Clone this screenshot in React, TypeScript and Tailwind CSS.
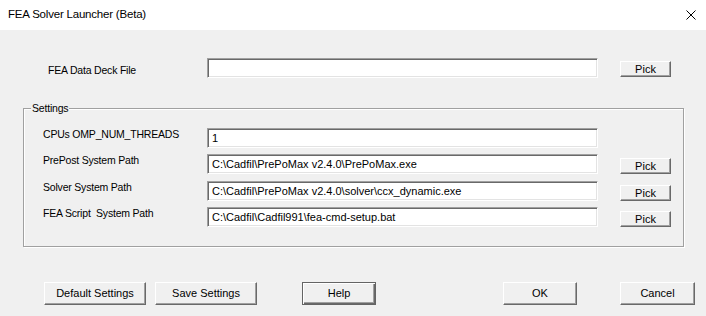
const raised =
  "flex items-center justify-center bg-[#f0f0f0] border border-t-white border-l-white border-r-[#696969] border-b-[#696969] shadow-[inset_-1px_-1px_0_#a0a0a0] text-[11px] text-black leading-none";

const sunken =
  "flex items-center bg-white border border-t-[#a0a0a0] border-l-[#a0a0a0] border-r-white border-b-white shadow-[inset_1px_1px_0_#696969,inset_-1px_-1px_0_#e3e3e3] pl-[4px] text-[11px] text-black whitespace-nowrap overflow-hidden";

const labelText = "text-[10.5px] tracking-[-0.2px] leading-[12px] text-black whitespace-pre";

function PickButton({ top = 3 }: { top?: number }) {
  return (
    <button
      type="button"
      className={`${raised} ml-[22px] w-[51px] h-[16px] ${top === 4 ? "mt-[4px]" : "mt-[3px]"}`}
    >
      Pick
    </button>
  );
}

function SettingRow({ label, value, pick, gap }: { label: string; value: string; pick?: boolean; gap?: string }) {
  return (
    <div className={`flex items-start h-[20px] ${gap ?? ""}`}>
      <div className={`w-[164px] ${labelText}`}>{label}</div>
      <div className={`${sunken} w-[391px] h-[20px]`}>{value}</div>
      {pick && <PickButton top={4} />}
    </div>
  );
}

export default function App() {
  return (
    <div className="w-[706px] h-[316px] bg-[#f0f0f0] overflow-hidden font-['Liberation_Sans',Arial,sans-serif] text-black">
      {/* Title bar */}
      <div className="h-[30px] bg-white flex items-center justify-between pl-[8px] pr-[10px]">
        <span className="text-[11.5px] tracking-[-0.2px] text-black">FEA Solver Launcher (Beta)</span>
        <svg width="10" height="10" viewBox="0 0 10 10" className="block">
          <path d="M0.5 0.5 L9.5 9.5 M9.5 0.5 L0.5 9.5" stroke="#000" strokeWidth="1" />
        </svg>
      </div>

      {/* Data deck row */}
      <div className="flex items-start h-[20px] mt-[28px] pl-[48px]">
        <div className={`w-[159px] pt-[6px] ${labelText}`}>FEA Data Deck File</div>
        <div className={`${sunken} w-[391px] h-[20px]`} />
        <PickButton />
      </div>

      {/* Settings group */}
      <div className="relative ml-[23px] mt-[30px] w-[661px] h-[139px] border border-[#a0a0a0] shadow-[inset_1px_1px_0_#ffffff,1px_1px_0_#ffffff] pt-[19px] pl-[19px]">
        <span className={`absolute left-[7px] -top-[7px] bg-[#f0f0f0] px-[1px] ${labelText}`}>Settings</span>
        <SettingRow label="CPUs OMP_NUM_THREADS" value="1" />
        <SettingRow label="PrePost System Path" value="C:\Cadfil\PrePoMax v2.4.0\PrePoMax.exe" pick gap="mt-[6px]" />
        <SettingRow label="Solver System Path" value="C:\Cadfil\PrePoMax v2.4.0\solver\ccx_dynamic.exe" pick gap="mt-[7px]" />
        <SettingRow label="FEA Script  System Path" value="C:\Cadfil\Cadfil991\fea-cmd-setup.bat" pick gap="mt-[6px]" />
      </div>

      {/* Bottom buttons */}
      <div className="flex items-start mt-[35px] pl-[44px]">
        <button type="button" className={`${raised} w-[102px] h-[23px]`}>Default Settings</button>
        <button type="button" className={`${raised} ml-[9px] w-[102px] h-[23px]`}>Save Settings</button>
        <button
          type="button"
          className="ml-[45px] w-[74px] h-[23px] flex items-center justify-center bg-[#f0f0f0] border border-[#646464] shadow-[inset_1px_1px_0_#ffffff,inset_-1px_-1px_0_#696969,inset_-2px_-2px_0_#a0a0a0] text-[11px] leading-none"
        >
          Help
        </button>
        <button type="button" className={`${raised} ml-[127px] w-[74px] h-[23px]`}>OK</button>
        <button type="button" className={`${raised} ml-[43px] w-[75px] h-[23px]`}>Cancel</button>
      </div>
    </div>
  );
}
